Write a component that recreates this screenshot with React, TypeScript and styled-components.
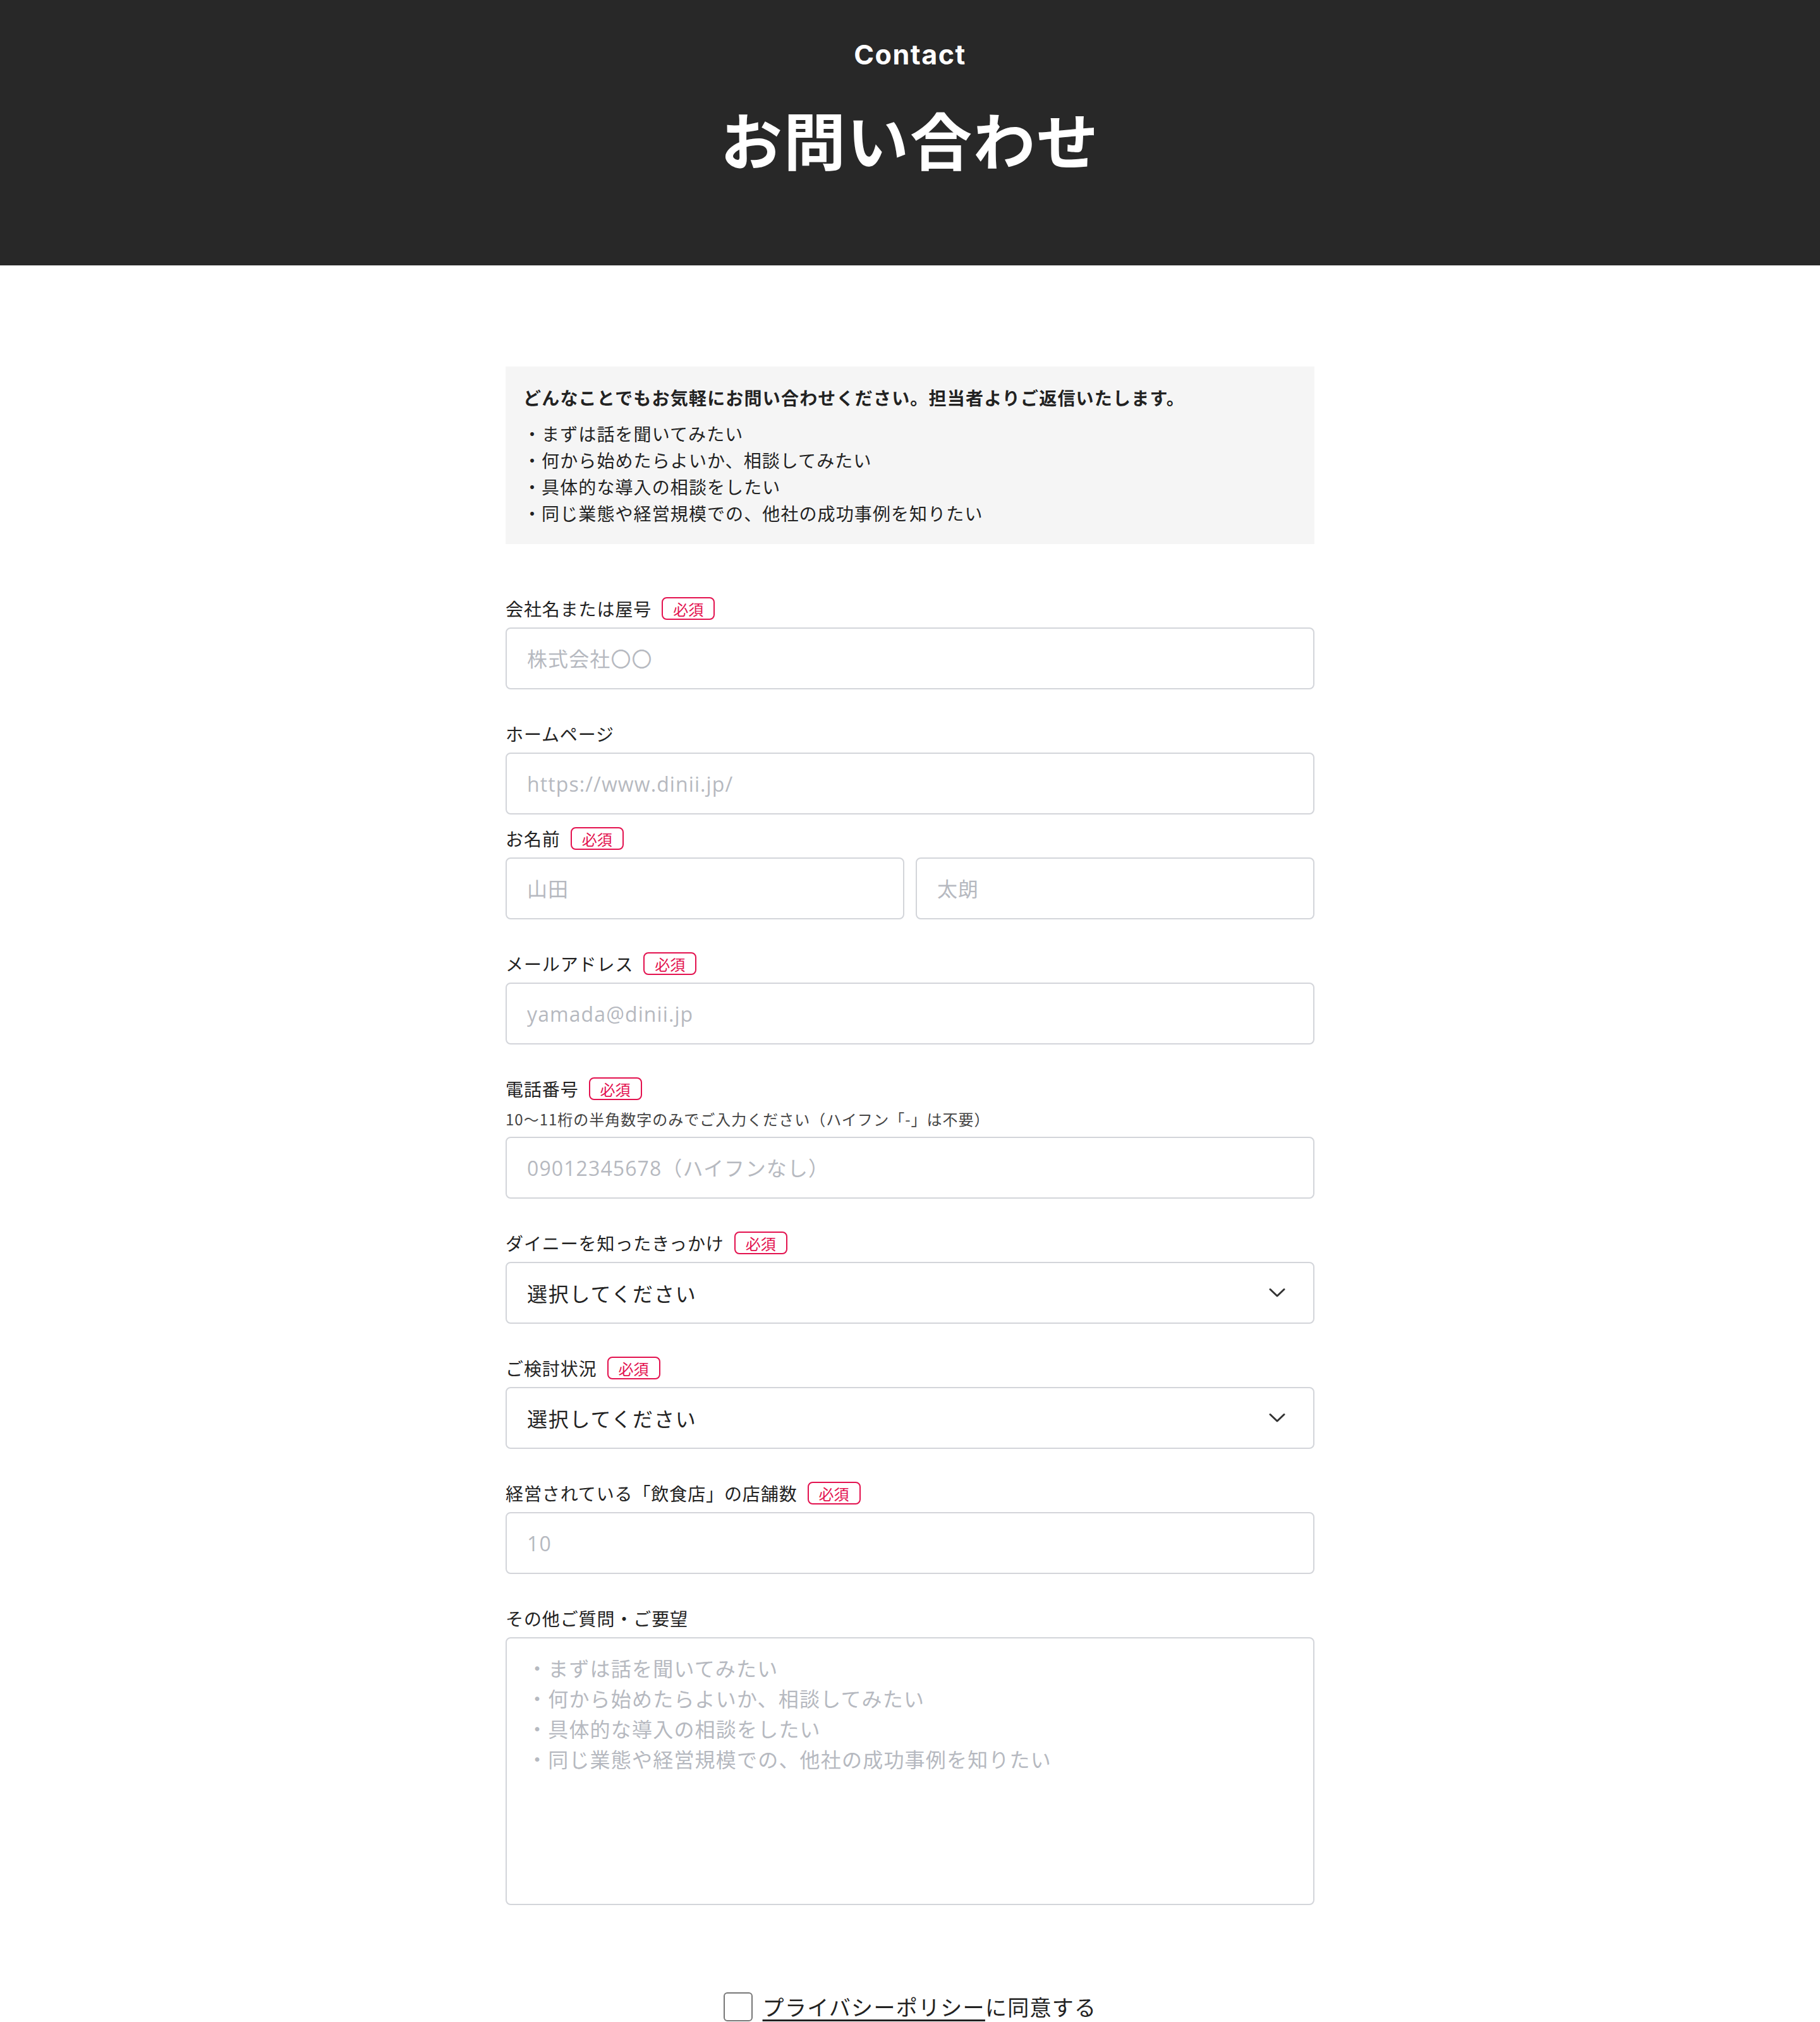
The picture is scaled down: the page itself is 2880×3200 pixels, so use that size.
import styled, { createGlobalStyle } from "styled-components";

const GlobalStyle = createGlobalStyle`
    * {
        box-sizing: border-box;
    }
    body {
        margin: 0;
        background: #ffffff;
        color: #222222;
        font-family: "Open Sans", "Noto Sans CJK JP", sans-serif;
    }
`;

const Hero = styled.header`
    height: 420px;
    background-color: #282828;
    color: #ffffff;
    display: flex;
    flex-direction: column;
    align-items: center;
    padding-top: 58px;
`;

const HeroSub = styled.p`
    margin: 0;
    font-family: "Inter", "Noto Sans", sans-serif;
    font-size: 43px;
    font-weight: 700;
    letter-spacing: 1.5px;
    line-height: 56px;
`;

const HeroTitle = styled.h1`
    margin: 42px 0 0;
    font-family: "Noto Sans CJK JP", sans-serif;
    font-size: 98px;
    font-weight: 700;
    letter-spacing: 2px;
    line-height: 124px;
`;

const Container = styled.main`
    width: 1280px;
    margin: 160px auto 0;
    padding-bottom: 200px;
`;

const Intro = styled.section`
    background-color: #f5f5f5;
    padding: 28px 28px;
    font-family: "Noto Sans CJK JP", sans-serif;
    color: #222222;
`;

const IntroLead = styled.p`
    margin: 0;
    font-size: 28px;
    font-weight: 700;
    line-height: 42px;
    letter-spacing: 1.2px;
`;

const IntroList = styled.ul`
    margin: 15px 0 0;
    padding: 0;
    list-style: none;
    font-size: 28px;
    line-height: 42px;
    letter-spacing: 1.1px;
`;

const Form = styled.form`
    margin-top: 82px;
    display: flex;
    flex-direction: column;
`;

const Field = styled.div<{ $tight?: boolean }>`
    display: flex;
    flex-direction: column;
    gap: 10px;
    margin-bottom: ${(props) => (props.$tight ? "18px" : "50px")};
`;

const LabelRow = styled.div`
    height: 40px;
    display: flex;
    align-items: center;
    gap: 16px;
`;

const Label = styled.label`
    font-family: "Noto Sans CJK JP", sans-serif;
    font-size: 28px;
    letter-spacing: 0.9px;
    color: #222222;
`;

const Required = styled.span`
    display: inline-flex;
    align-items: center;
    justify-content: center;
    width: 84px;
    height: 36px;
    border: 2px solid #e3124f;
    border-radius: 8px;
    color: #e3124f;
    font-family: "Noto Sans CJK JP", sans-serif;
    font-size: 24px;
`;

const Hint = styled.p`
    margin: 0;
    font-family: "Noto Sans CJK JP", sans-serif;
    font-size: 24px;
    line-height: 36px;
    letter-spacing: 1px;
    color: #444444;
`;

const fieldBox = `
    width: 100%;
    border: 2px solid #d3d5da;
    border-radius: 8px;
    background: #ffffff;
    padding: 0 32px;
    font-family: "Open Sans", "Noto Sans CJK JP", sans-serif;
    font-size: 32px;
    letter-spacing: 1.1px;
    color: #222222;
    outline: none;
    &::placeholder {
        color: #b6b9c0;
    }
`;

const Input = styled.input`
    ${fieldBox}
    height: 98px;
`;

const NameRow = styled.div`
    display: grid;
    grid-template-columns: 1fr 1fr;
    gap: 18px;
`;

const SelectWrap = styled.div`
    position: relative;
`;

const Select = styled.select`
    ${fieldBox}
    height: 98px;
    appearance: none;
    font-family: "Noto Sans CJK JP", sans-serif;
    letter-spacing: 1.8px;
`;

const Chevron = styled.svg`
    position: absolute;
    right: 46px;
    top: 50%;
    width: 26px;
    height: 16px;
    transform: translateY(-50%);
    pointer-events: none;
`;

const TextArea = styled.textarea`
    ${fieldBox}
    height: 424px;
    padding: 22px 32px;
    resize: none;
    font-family: "Noto Sans CJK JP", sans-serif;
    line-height: 48px;
    letter-spacing: 1.2px;
`;

const Agree = styled.label`
    margin-top: 86px;
    align-self: center;
    display: flex;
    align-items: center;
    gap: 16px;
    font-family: "Noto Sans CJK JP", sans-serif;
    font-size: 34px;
    letter-spacing: 1.3px;
    color: #222222;
`;

const Check = styled.span`
    width: 46px;
    height: 46px;
    border: 2px solid #777777;
    border-radius: 6px;
    background: #ffffff;
`;

const PolicyLink = styled.a`
    color: #222222;
    text-decoration: underline;
    text-decoration-thickness: 3px;
    text-underline-offset: 6px;
`;

const tips = [
    "・まずは話を聞いてみたい",
    "・何から始めたらよいか、相談してみたい",
    "・具体的な導入の相談をしたい",
    "・同じ業態や経営規模での、他社の成功事例を知りたい",
];

function Badge() {
    return <Required>必須</Required>;
}

function DownArrow() {
    return (
        <Chevron viewBox="0 0 26 16" fill="none">
            <path d="M2 2.5 L13 13 L24 2.5" stroke="#333333" strokeWidth="3" strokeLinecap="round" strokeLinejoin="round" />
        </Chevron>
    );
}

function App() {
    return (
        <>
            <GlobalStyle />
            <Hero>
                <HeroSub>Contact</HeroSub>
                <HeroTitle>お問い合わせ</HeroTitle>
            </Hero>
            <Container>
                <Intro>
                    <IntroLead>どんなことでもお気軽にお問い合わせください。担当者よりご返信いたします。</IntroLead>
                    <IntroList>
                        {tips.map((tip) => (
                            <li key={tip}>{tip}</li>
                        ))}
                    </IntroList>
                </Intro>

                <Form onSubmit={(e) => e.preventDefault()}>
                    <Field>
                        <LabelRow>
                            <Label>会社名または屋号</Label>
                            <Badge />
                        </LabelRow>
                        <Input placeholder="株式会社〇〇" />
                    </Field>

                    <Field $tight>
                        <LabelRow>
                            <Label>ホームページ</Label>
                        </LabelRow>
                        <Input placeholder="https://www.dinii.jp/" />
                    </Field>

                    <Field>
                        <LabelRow>
                            <Label>お名前</Label>
                            <Badge />
                        </LabelRow>
                        <NameRow>
                            <Input placeholder="山田" />
                            <Input placeholder="太朗" />
                        </NameRow>
                    </Field>

                    <Field>
                        <LabelRow>
                            <Label>メールアドレス</Label>
                            <Badge />
                        </LabelRow>
                        <Input placeholder="yamada@dinii.jp" />
                    </Field>

                    <Field>
                        <LabelRow>
                            <Label>電話番号</Label>
                            <Badge />
                        </LabelRow>
                        <Hint>10〜11桁の半角数字のみでご入力ください（ハイフン「-」は不要）</Hint>
                        <Input placeholder="09012345678（ハイフンなし）" />
                    </Field>

                    <Field>
                        <LabelRow>
                            <Label>ダイニーを知ったきっかけ</Label>
                            <Badge />
                        </LabelRow>
                        <SelectWrap>
                            <Select defaultValue="">
                                <option value="">選択してください</option>
                            </Select>
                            <DownArrow />
                        </SelectWrap>
                    </Field>

                    <Field>
                        <LabelRow>
                            <Label>ご検討状況</Label>
                            <Badge />
                        </LabelRow>
                        <SelectWrap>
                            <Select defaultValue="">
                                <option value="">選択してください</option>
                            </Select>
                            <DownArrow />
                        </SelectWrap>
                    </Field>

                    <Field>
                        <LabelRow>
                            <Label>経営されている「飲食店」の店舗数</Label>
                            <Badge />
                        </LabelRow>
                        <Input placeholder="10" />
                    </Field>

                    <Field>
                        <LabelRow>
                            <Label>その他ご質問・ご要望</Label>
                        </LabelRow>
                        <TextArea placeholder={tips.join("\n")} />
                    </Field>

                    <Agree>
                        <Check />
                        <span>
                            <PolicyLink href="#privacy">プライバシーポリシー</PolicyLink>に同意する
                        </span>
                    </Agree>
                </Form>
            </Container>
        </>
    );
}

export default App;
